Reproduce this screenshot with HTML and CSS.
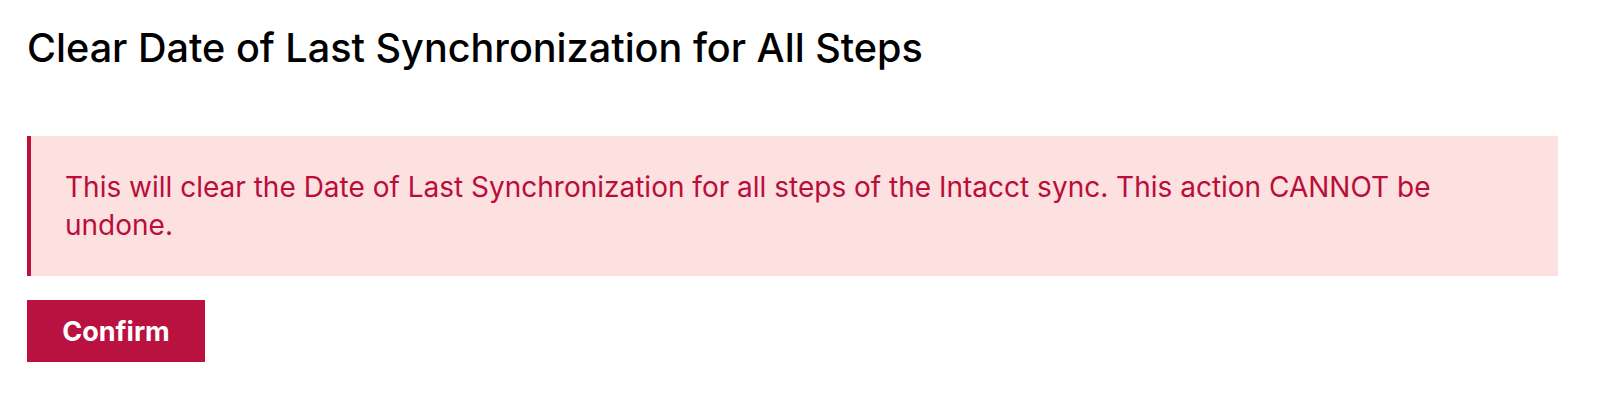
FILE: index.html
```html
<!DOCTYPE html>
<html>
<head>
<link rel="stylesheet" href="styles.css">
</head>
<body>
<div class="page">
<h1 class="title">Clear Date of Last Synchronization for All Steps</h1>
<div class="alert">This will clear the Date of Last Synchronization for all steps of the Intacct sync. This action CANNOT be undone.</div>
<button class="confirm-button">Confirm</button>
</div>
</body>
</html>
```

FILE: styles.css
```css
body { margin: 0; font-family: Inter, "Noto Sans", sans-serif; background: #fff; color: #000; }
.page { padding: 24px 42px 0 27px; }
.title { font-size: 39.6px; font-weight: 500; margin: 0 0 64px 0; line-height: 48px; }
.alert { background: #fde0e0; color: #b90e3a; border-left: 4px solid #c0103c; padding: 32px 60px 32px 34px; font-size: 28px; line-height: 38px; }
.confirm-button { margin-top: 24px; background: #b91240; color: #fff; border: none; font-family: inherit; font-size: 27px; font-weight: 700; width: 178px; height: 62px; }
```
